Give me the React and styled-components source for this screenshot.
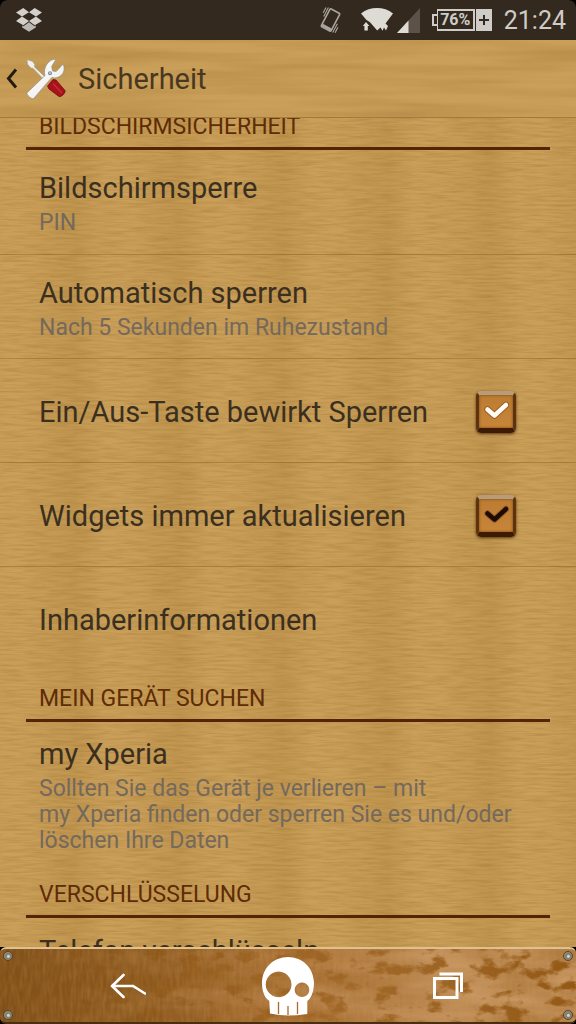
import React from "react";
import styled, { createGlobalStyle } from "styled-components";

const GlobalStyle = createGlobalStyle`
  *, *::before, *::after { box-sizing: border-box; }
  html, body { margin: 0; height: 100%; background: #000; }
  body { font-family: Roboto, "Liberation Sans", sans-serif; color: #3b301f; }
  h1, h2, p, ul { margin: 0; padding: 0; font-weight: 400; }
  button { font: inherit; color: inherit; background: none; border: 0; padding: 0; cursor: pointer; }
`;

const Screen = styled.div`
  display: flex;
  flex-direction: column;
  height: 100vh;
  background: #000;
`;

const StatusBar = styled.div`
  display: flex;
  align-items: center;
  flex: none;
  height: 40px;
  padding: 0 10px 0 16px;
  border-radius: 8px 8px 0 0;
  background: #33291e;
  color: #cfccc7;
`;

const StatusIcons = styled.div`
  display: flex;
  align-items: center;
  gap: 12px;
  margin-left: auto;
`;

const Network = styled.div`
  display: flex;
  align-items: center;
  gap: 4px;
`;

const Battery = styled.div`
  display: flex;
  align-items: center;
  width: 60px;
  height: 22px;
`;

const BatteryTip = styled.span`
  width: 5px;
  height: 12px;
  border: 2px solid #cfccc7;
  border-right: 0;
`;

const BatteryLevel = styled.span`
  flex: 1;
  height: 22px;
  border: 2px solid #cfccc7;
  border-width: 2px 2px 2px 1px;
  font-size: 16px;
  font-weight: 700;
  line-height: 18px;
  text-align: center;
`;

const BatteryPlus = styled.span`
  display: flex;
  align-items: center;
  justify-content: center;
  width: 16px;
  height: 22px;
  margin-left: 1px;
  background: #cfccc7;
`;

const Clock = styled.time`
  padding-top: 2px;
  font-size: 25px;
  line-height: 32px;
`;

const Wooden = styled.div`
  position: relative;
  isolation: isolate;
  overflow: hidden;
  background: #c99f59;
`;

const Texture = styled.svg`
  position: absolute;
  inset: 0;
  z-index: -1;
  width: 100%;
  height: 100%;
`;

const Header = styled(Wooden).attrs({ as: "header" })`
  display: flex;
  align-items: center;
  flex: none;
  height: 78px;
  border-bottom: 1px solid #a27a3d;
`;

const UpButton = styled.button`
  display: flex;
  align-items: center;
  gap: 8px;
  padding-left: 6px;
`;

const Title = styled.h1`
  margin-left: 12px;
  font-size: 29px;
  line-height: 36px;
  color: #483821;
`;

const Content = styled(Wooden).attrs({ as: "main" })`
  flex: 1;
  min-height: 0;
`;

const ContentInner = styled.div`
  margin-top: -20px;
  background: repeating-linear-gradient(90deg, transparent 0 23px, rgba(140, 95, 25, 0.14) 75px, transparent 104px);
`;

const SectionTitle = styled.h2`
  margin: 0 26px;
  height: 52px;
  padding: 15px 13px 0;
  border-bottom: 3px solid #532503;
  font-size: 23px;
  line-height: 28px;
  color: #5e2c06;
  text-transform: uppercase;
`;

const List = styled.ul`
  list-style: none;
`;

const rowHeights = { short: 64, normal: 104, tall: 144 };

const Row = styled.li`
  display: flex;
  align-items: center;
  justify-content: space-between;
  min-height: ${(p) => rowHeights[p.$size]}px;
  padding: 2px 60px 0 39px;

  & + & {
    border-top: 1px solid rgba(105, 68, 20, 0.3);
  }
`;

const RowTitle = styled.label`
  display: block;
  font-size: 29px;
  line-height: 36px;
  white-space: nowrap;
`;

const Summary = styled.p`
  margin-top: 4px;
  font-size: 23px;
  line-height: 26px;
  color: #74695c;
  white-space: pre;
`;

const Tick = styled.span`
  display: grid;
  flex: none;
  width: 40px;
  height: 42px;

  > * { grid-area: 1 / 1; }
  svg { pointer-events: none; }
`;

const TickInput = styled.input`
  appearance: none;
  width: 40px;
  height: 42px;
  margin: 0;
  border: solid;
  border-width: 4px 3px 5px;
  border-color: #b79c79 #5d3210 #3c1a04 #5d3210;
  border-radius: 5px;
  background: linear-gradient(#bb7c31, #c78539);
  box-shadow: 0 1px 3px rgba(60, 30, 0, 0.8), inset 0 0 3px #7c430f;
`;

const NavBar = styled(Wooden).attrs({ as: "nav" })`
  display: grid;
  grid-template-columns: repeat(3, 1fr);
  align-items: center;
  flex: none;
  height: 77px;
  padding: 0 48px;
  border: solid;
  border-width: 2px 0;
  border-color: #dfc18f transparent #4a2e12;
  border-radius: 6px;
  background: linear-gradient(90deg, #80501a 0%, #8a571d 25%, #a46c30 50%, #b5824b 75%, #ad7a40 100%);
`;

const NavButton = styled.button`
  display: flex;
  align-items: center;
  justify-content: center;
  height: 64px;
`;

const Screw = styled.span`
  position: absolute;
  ${(p) => p.$side}: 3px;
  ${(p) => p.$edge}: 2px;
  width: 10px;
  height: 10px;
  border: 1px solid #57452d;
  border-radius: 50%;
  background: radial-gradient(circle at 55% 55%, #d8d2c0 0 15%, #7c7a6c 35%, #96917f 70%, #5f543f);
`;

function Grain({ id, frequency, seed }) {
  return (
    <Texture aria-hidden="true">
      <filter id={id} x="0" y="0" width="100%" height="100%" colorInterpolationFilters="sRGB">
        <feTurbulence type="fractalNoise" baseFrequency={frequency} numOctaves="3" seed={seed} />
        <feColorMatrix values="0 0 0 0 .5  0 0 0 0 .32  0 0 0 0 .08  .42 0 0 0 -.15" />
      </filter>
      <rect width="100%" height="100%" filter={`url(#${id})`} />
    </Texture>
  );
}

function RustGrain() {
  return (
    <Texture aria-hidden="true">
      <defs>
        <linearGradient id="wear">
          <stop offset="0" stopColor="#fff" stopOpacity="0" />
          <stop offset=".5" stopColor="#fff" stopOpacity=".45" />
          <stop offset="1" stopColor="#fff" />
        </linearGradient>
        <mask id="wearMask"><rect width="100%" height="100%" fill="url(#wear)" /></mask>
      </defs>
      <filter id="spots" x="0" y="0" width="100%" height="100%" colorInterpolationFilters="sRGB">
        <feTurbulence type="fractalNoise" baseFrequency=".04 .07" numOctaves="6" seed="21" />
        <feColorMatrix values="0 0 0 0 .58  0 0 0 0 .35  0 0 0 0 .09  6 0 0 0 -3.1" />
      </filter>
      <filter id="haze" x="0" y="0" width="100%" height="100%" colorInterpolationFilters="sRGB">
        <feTurbulence type="fractalNoise" baseFrequency=".012 .05" numOctaves="4" seed="5" />
        <feColorMatrix values="0 0 0 0 .82  0 0 0 0 .63  0 0 0 0 .43  1.6 0 0 0 -.45" />
      </filter>
      <filter id="scratches" x="0" y="0" width="100%" height="100%" colorInterpolationFilters="sRGB">
        <feTurbulence type="fractalNoise" baseFrequency=".3 .06" numOctaves="2" seed="8" />
        <feColorMatrix values="0 0 0 0 .8  0 0 0 0 .57  0 0 0 0 .28  .5 0 0 0 -.17" />
      </filter>
      <rect width="100%" height="100%" filter="url(#scratches)" />
      <g mask="url(#wearMask)">
        <rect width="100%" height="100%" filter="url(#haze)" />
        <rect width="100%" height="100%" filter="url(#spots)" />
      </g>
    </Texture>
  );
}

function DropboxIcon() {
  return (
    <svg width="26" height="24" viewBox="0 0 26 24" fill="#d3d0cb" role="img" aria-label="Dropbox">
      <path d="M0 4.4 7.3 0 13 4.2 6 8.4ZM26 4.4 18.7 0 13 4.2 20 8.4ZM6 8.6 0 13 7.3 17.3 13 12.9ZM20 8.6 26 13 18.7 17.3 13 12.9Z" />
      <path d="M6.2 17.6 7.5 18.3 13 14.2 18.5 18.3 19.8 17.6V19.4L13 23.7 6.2 19.4Z" opacity=".85" />
    </svg>
  );
}

function VibrateIcon() {
  return (
    <svg width="30" height="28" viewBox="0 0 30 28" fill="none" stroke="#aaa59e" strokeWidth="1.6" role="img" aria-label="Vibration">
      <g transform="rotate(28 11.5 14)">
        <rect x="6" y="4" width="11" height="20" rx="1" />
        <path d="M6.5 22.2h10" strokeWidth="2.6" />
        <path d="M3.8 4v10M1.6 5v6M19.3 14v10M21.5 17v6" strokeWidth="1.1" />
      </g>
    </svg>
  );
}

function WifiIcon() {
  return (
    <svg width="32" height="24" viewBox="0 0 32 24" fill="#dedbd5" role="img" aria-label="WLAN">
      <path d="M0 5.500C9-1.800 23-1.800 32 5.500L24.500 15.500 27 18 25 22.500 23 19.500 21.500 22.800 19.500 19.500 16.200 22.500 9 14.200 5.500 12Z" />
      <path d="m5 14 3.400 4H6.800v4.500H3.400V18H1.800Z" />
    </svg>
  );
}

function SignalIcon() {
  return (
    <svg width="23" height="25" viewBox="0 0 23 25" role="img" aria-label="Mobilfunk">
      <path d="M23 0v25H0Z" fill="#5c524a" />
      <path d="M11.5 12.5V25H0Z" fill="#dedbd5" />
    </svg>
  );
}

function ToolsIcon() {
  return (
    <svg width="40" height="42" viewBox="0 0 40 42" aria-hidden="true">
      <defs>
        <linearGradient id="steel" x1="0" y1="0" x2="1" y2="1">
          <stop offset="0" stopColor="#fff" />
          <stop offset=".65" stopColor="#f2f1ee" />
          <stop offset="1" stopColor="#b9b6b1" />
        </linearGradient>
      </defs>
      <path d="m1 1.500 5.500 1.700 2.400 3.400-.4 2.300L20 19.800l-2 2L7 10.400l-2.400-.4L1.300 6Z" fill="#f1efea" stroke="#a79a82" strokeWidth=".8" />
      <path d="m21.500 28 5.500-6.500 3 .5 9 10.500c.6 2.500-3.300 6.600-6 6L23 31Z" fill="#aa1119" stroke="#640910" strokeWidth=".7" />
      <path d="m27.500 26 8 8.500" stroke="#c0303a" strokeWidth="1.500" strokeLinecap="round" />
      <path d="M.8 35 19 17.500c-1.200-3.200-.4-8.600 2.600-12.200 2.600-3 5.300-4.300 8.300-3.900l-4.200 7 .9 4.600 3.600.4 7-7.300c2.300 5.700.3 11.100-5.100 13.100-2.600 1-4.300.8-6.300.2L7.500 40.700c-2.300.3-6.700-3.200-6.700-5.700Z" fill="url(#steel)" stroke="#8f8b84" strokeWidth=".7" />
      <circle cx="24" cy="15.200" r="2" fill="#768894" />
      <circle cx="24" cy="15.200" r=".9" fill="#d7dde0" />
    </svg>
  );
}

function SkullIcon() {
  return (
    <svg width="54" height="60" viewBox="0 0 54 60" aria-hidden="true">
      <path
        fill="#fff"
        fillRule="evenodd"
        d="M27 1C41.500 1 53 12.300 53 27C53 33 51.600 38.500 48.500 43L46.300 45V58Q36 59.500 27 59.500Q18 59.500 9 57.500L8.300 45L6 43C2.500 39 1 33 1 27C1 12.300 12.500 1 27 1ZM17.600 15.500a12.900 12.900 0 1 0 .01 0ZM41 26.500a7.300 7.300 0 1 0 .01 0Z"
      />
      <path d="M17.500 46v12M27 50v9M36.500 46v12" stroke="#a66a2c" strokeWidth="1.300" />
    </svg>
  );
}

function CheckBox({ id, color, halo }) {
  return (
    <Tick>
      <TickInput type="checkbox" id={id} defaultChecked />
      <svg width="40" height="42" viewBox="0 0 40 42" fill="none" strokeLinejoin="round" strokeLinecap="round" aria-hidden="true">
        <path d="m11.500 18.500 7 6 11.500-10.500" stroke={halo} strokeWidth="6.500" />
        <path d="m11.500 18.500 7 6 11.500-10.500" stroke={color} strokeWidth="4.500" />
      </svg>
    </Tick>
  );
}

function Entry({ title, summary, size = "normal", tick }) {
  return (
    <Row $size={size}>
      <div>
        <RowTitle as={tick ? "label" : "p"} htmlFor={tick ? tick.id : undefined}>{title}</RowTitle>
        {summary && <Summary>{summary}</Summary>}
      </div>
      {tick && <CheckBox {...tick} />}
    </Row>
  );
}

const sections = [
  {
    title: "Bildschirmsicherheit",
    rows: [
      { title: "Bildschirmsperre", summary: "PIN" },
      { title: "Automatisch sperren", summary: "Nach 5 Sekunden im Ruhezustand" },
      { title: "Ein/Aus-Taste bewirkt Sperren", tick: { id: "power-lock", color: "#fffaf2", halo: "#9a5c22" } },
      { title: "Widgets immer aktualisieren", tick: { id: "widgets", color: "#1f0b02", halo: "#a0622a" } },
      { title: "Inhaberinformationen" },
    ],
  },
  {
    title: "Mein Gerät suchen",
    rows: [
      {
        title: "my Xperia",
        summary: "Sollten Sie das Gerät je verlieren – mit\nmy Xperia finden oder sperren Sie es und/oder\nlöschen Ihre Daten",
        size: "tall",
      },
    ],
  },
  { title: "Verschlüsselung", rows: [{ title: "Telefon verschlüsseln", size: "short" }] },
];

export default function App() {
  return (
    <Screen>
      <GlobalStyle />
      <StatusBar>
        <DropboxIcon />
        <StatusIcons>
          <VibrateIcon />
          <Network>
            <WifiIcon />
            <SignalIcon />
          </Network>
          <Battery>
            <BatteryTip />
            <BatteryLevel>76%</BatteryLevel>
            <BatteryPlus>
              <svg width="10" height="10" viewBox="0 0 10 10" aria-hidden="true">
                <path d="M5 0v10M0 5h10" stroke="#33291e" strokeWidth="2" />
              </svg>
            </BatteryPlus>
          </Battery>
          <Clock>21:24</Clock>
        </StatusIcons>
      </StatusBar>

      <Header>
        <Grain id="grainHeader" frequency=".006 .09" seed="3" />
        <UpButton aria-label="Zurück">
          <svg width="12" height="22" viewBox="0 0 12 22" fill="none" aria-hidden="true">
            <path d="m10 1.500-7.500 9 7.500 9" stroke="#251c10" strokeWidth="3" />
          </svg>
          <ToolsIcon />
        </UpButton>
        <Title>Sicherheit</Title>
      </Header>

      <Content>
        <Grain id="grainList" frequency=".04 .45" seed="7" />
        <ContentInner>
          {sections.map((section) => (
            <section key={section.title}>
              <SectionTitle>{section.title}</SectionTitle>
              <List>
                {section.rows.map((row) => (
                  <Entry key={row.title} {...row} />
                ))}
              </List>
            </section>
          ))}
        </ContentInner>
      </Content>

      <NavBar>
        <RustGrain />
        <Screw $side="left" $edge="top" />
        <Screw $side="left" $edge="bottom" />
        <Screw $side="right" $edge="top" />
        <Screw $side="right" $edge="bottom" />
        <NavButton aria-label="Zurück">
          <svg width="36" height="26" viewBox="0 0 36 26" fill="none" stroke="#fff" strokeWidth="2.600" strokeLinecap="round" aria-hidden="true">
            <path d="M13.500 2 2 13l11.500 11M2 13h21l12 7.500" />
          </svg>
        </NavButton>
        <NavButton aria-label="Startseite">
          <SkullIcon />
        </NavButton>
        <NavButton aria-label="Letzte Apps">
          <svg width="30" height="28" viewBox="0 0 30 28" fill="none" stroke="#fff" strokeWidth="3" aria-hidden="true">
            <path d="M1.500 6.500h22.500v19H1.500Z" />
            <path d="M6.500 2H28.500V20" />
          </svg>
        </NavButton>
      </NavBar>
    </Screen>
  );
}
